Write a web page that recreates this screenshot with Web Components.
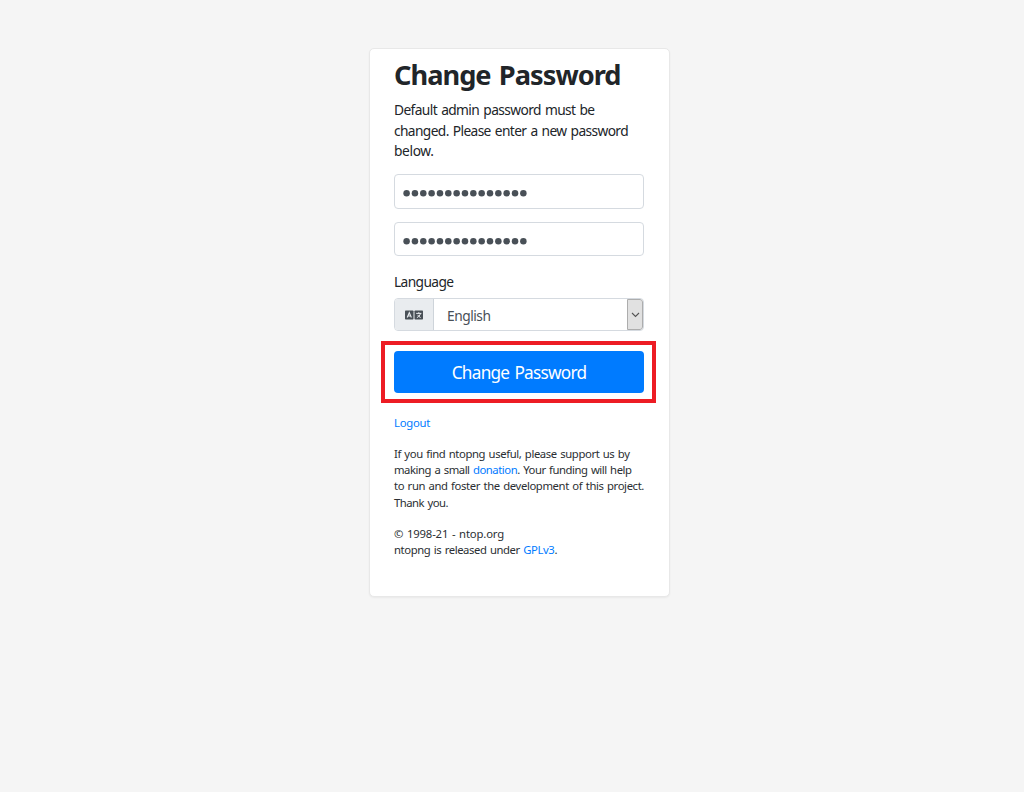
<!DOCTYPE html>
<html lang="en">
<head>
<meta charset="utf-8">
<title>Change Password</title>
<style>
html,body{margin:0;height:100%;background:#f5f5f5;overflow:hidden}
body{font-family:"Noto Sans","Open Sans",sans-serif;font-size:13.75px;color:#212529}
</style>
</head>
<body>
<password-page></password-page>
<script>
const define = (name, html, setup) => {
  const template = document.createElement('template');
  template.innerHTML = html;
  customElements.define(name, class extends HTMLElement {
    connectedCallback() {
      if (this.shadowRoot) return;
      this.attachShadow({mode: 'open'}).append(template.content.cloneNode(true));
      if (setup) setup(this);
    }
  });
};

// One line of text, tracked so that it spans the width given in its "w" attribute.
define('text-line', `<style>
:host{display:block;white-space:nowrap}
span{display:inline-block;word-spacing:.08em}
</style><span><slot></slot></span>`, el => {
  const span = el.shadowRoot.querySelector('span');
  const gap = (el.getAttribute('w') - span.getBoundingClientRect().width) / el.textContent.length;
  span.style.letterSpacing = gap.toFixed(4) + 'px';
});

define('text-link', `<style>
:host{display:inline;color:#007bff;cursor:pointer}
</style><slot></slot>`);

define('login-card', `<style>
:host{display:block;box-sizing:border-box;width:301px;height:549px;margin:48px 0 0 369px;padding:9px 25px 0 24px;background:#fff;border:1px solid #e8e8e8;border-radius:5px;box-shadow:0 1px 2px rgba(0,0,0,.05)}
</style><slot></slot>`);

define('password-field', `<style>
:host{display:flex;align-items:center;box-sizing:border-box;height:35px;padding:3px 0 0 8px;border:1px solid #d5dae0;border-radius:4px;background:#fff}
svg{display:block}
</style><svg width="126" height="8" fill="#495057"></svg>`, el => {
  const svg = el.shadowRoot.querySelector('svg');
  for (let i = 0; i < 15; i++) {
    const dot = document.createElementNS('http://www.w3.org/2000/svg', 'circle');
    dot.setAttribute('cx', 3.6 + i * 8.34);
    dot.setAttribute('cy', 4.2);
    dot.setAttribute('r', 3.25);
    svg.append(dot);
  }
});

define('language-select', `<style>
:host{display:flex;box-sizing:border-box;height:33px;border:1px solid #d5dae0;border-radius:4px;overflow:hidden;background:#fff;color:#495057}
.icon{display:flex;align-items:center;justify-content:center;width:39px;background:#e9ecef;border-right:1px solid #ced4da;box-sizing:border-box}
.value{flex:1;padding:6px 0 0 13px;line-height:21px}
.arrow{display:flex;align-items:center;justify-content:center;box-sizing:border-box;width:16px;background:#e1e1e1;border:1px solid #adadad;border-radius:0 3px 3px 0}
svg{display:block}
</style>
<div class="icon"><svg width="18" height="10" viewBox="0 0 18 10"><rect y=".5" width="8.5" height="9" rx=".7" fill="#495057"/><rect x="9.5" y=".5" width="8.5" height="9" rx=".7" fill="#495057"/><path d="M2.2 7.5 4.3 2.7 6.4 7.5M3 6h2.6" fill="none" stroke="#e9ecef" stroke-width="1.1"/><path d="M11.2 3.4h5.2M13.8 2.2v1.2M15.5 3.4c-.5 2-1.8 3.4-3.6 4.2M12.7 4.9c.7 1.2 1.6 2 2.9 2.7" fill="none" stroke="#e9ecef"/></svg></div>
<div class="value"><slot></slot></div>
<div class="arrow"><svg width="9" height="6" viewBox="0 0 9 6"><path d="m1 1 3.5 3.5L8 1" fill="none" stroke="#555" stroke-width="1.1"/></svg></div>`);

define('primary-button', `<style>
:host{display:flex;justify-content:center;box-sizing:border-box;height:42px;padding-top:9px;line-height:26px;border-radius:4px;background:#007bff;color:#fff;font-size:17.2px}
</style><slot></slot>`);

// Red frame that surrounds the control in its slot.
define('highlight-frame', `<style>
:host{display:block;position:relative}
i{position:absolute;inset:-10px -12px -10px -13px;border:4px solid #ed1c24;pointer-events:none}
</style><slot></slot><i></i>`);

define('password-page', `<style>
:host{display:flow-root}
h1{margin:0;font-size:27.2px;line-height:33px;font-weight:700}
.intro{margin-top:9px;line-height:20.7px}
.fields{display:grid;gap:13px;margin-top:12px}
password-field+password-field{height:34px}
.label{margin-top:15px;line-height:21px}
language-select{margin-top:6px}
highlight-frame{margin-top:20px}
.small{font-size:11.3px;line-height:16.4px;color:#2b2f33}
.logout{margin-top:22px}
.support{margin-top:14px}
.legal{margin-top:14.6px}
</style>
<login-card>
  <h1><text-line w="226.5">Change Password</text-line></h1>
  <div class="intro">
    <text-line w="200.5">Default admin password must be</text-line>
    <text-line w="234">changed. Please enter a new password</text-line>
    <text-line w="39.5">below.</text-line>
  </div>
  <div class="fields"><password-field></password-field><password-field></password-field></div>
  <div class="label"><text-line w="59.5">Language</text-line></div>
  <language-select><text-line w="43.5">English</text-line></language-select>
  <highlight-frame><primary-button><text-line w="134.5">Change Password</text-line></primary-button></highlight-frame>
  <div class="small logout"><text-line w="36"><text-link>Logout</text-link></text-line></div>
  <div class="small support">
    <text-line w="235.5">If you find ntopng useful, please support us by</text-line>
    <text-line w="237.5">making a small <text-link>donation</text-link>. Your funding will help</text-line>
    <text-line w="250">to run and foster the development of this project.</text-line>
    <text-line w="54">Thank you.</text-line>
  </div>
  <div class="small legal">
    <text-line w="110">© 1998-21 - ntop.org</text-line>
    <text-line w="163">ntopng is released under <text-link>GPLv3</text-link>.</text-line>
  </div>
</login-card>`);
</script>
</body>
</html>
